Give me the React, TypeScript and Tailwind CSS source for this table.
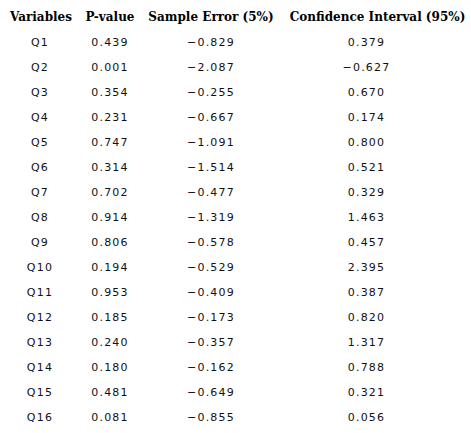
import React from "react";

const rows: [string, string, string, string][] = [
  ["Q1", "0.439", "\u22120.829", "0.379"],
  ["Q2", "0.001", "\u22122.087", "\u22120.627"],
  ["Q3", "0.354", "\u22120.255", "0.670"],
  ["Q4", "0.231", "\u22120.667", "0.174"],
  ["Q5", "0.747", "\u22121.091", "0.800"],
  ["Q6", "0.314", "\u22121.514", "0.521"],
  ["Q7", "0.702", "\u22120.477", "0.329"],
  ["Q8", "0.914", "\u22121.319", "1.463"],
  ["Q9", "0.806", "\u22120.578", "0.457"],
  ["Q10", "0.194", "\u22120.529", "2.395"],
  ["Q11", "0.953", "\u22120.409", "0.387"],
  ["Q12", "0.185", "\u22120.173", "0.820"],
  ["Q13", "0.240", "\u22120.357", "1.317"],
  ["Q14", "0.180", "\u22120.162", "0.788"],
  ["Q15", "0.481", "\u22120.649", "0.321"],
  ["Q16", "0.081", "\u22120.855", "0.056"],
];

export default function App() {
  return (
    <div className="w-[471px] h-[433px] bg-white text-black overflow-hidden">
      <div
        className="flex h-[31px] items-center text-[12px] font-bold whitespace-nowrap leading-[14px] pt-[3px]"
        style={{ fontFamily: '"DejaVu Serif", serif' }}
      >
        <div className="w-[82px] flex justify-center">Variables</div>
        <div className="w-[56px] flex justify-center">P-value</div>
        <div className="w-[146px] flex justify-center">Sample Error (5%)</div>
        <div className="w-[187px] flex justify-center">Confidence Interval (95%)</div>
      </div>
      <div
        style={{ fontFamily: '"DejaVu Sans", sans-serif' }}
        className="text-[11px] tracking-[1.2px] text-[#111]"
      >
        {rows.map((r) => (
          <div key={r[0]} className="flex h-[25px] items-center whitespace-nowrap">
            <div className="w-[82px] flex justify-center pr-[2px]">{r[0]}</div>
            <div className="w-[56px] flex justify-center">{r[1]}</div>
            <div className="w-[146px] flex justify-center">{r[2]}</div>
            <div className="w-[187px] flex justify-center pr-[22px]">{r[3]}</div>
          </div>
        ))}
      </div>
    </div>
  );
}
